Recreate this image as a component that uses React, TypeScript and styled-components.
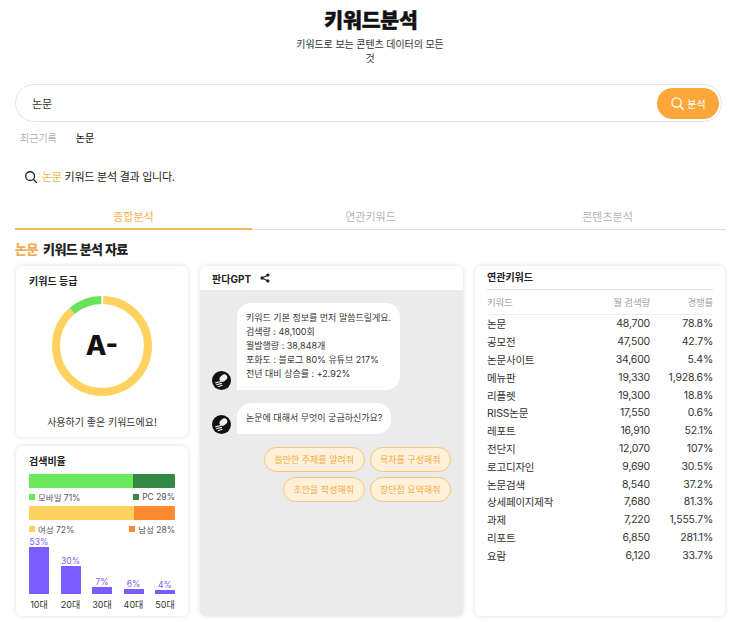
import React from "react";
import styled, { createGlobalStyle } from "styled-components";

const Global = createGlobalStyle`
  html, body { margin: 0; padding: 0; background: #fff; }
  body { font-family: Inter, "Noto Sans CJK KR", sans-serif; color: #222; }
  * { box-sizing: border-box; }
`;
const Page = styled.div`
  width: 743px; height: 622px; overflow: hidden; padding: 9px 18px 0 15px;
`;
const Header = styled.header`
  display: flex; flex-direction: column; align-items: center;
`;
const Title = styled.h1`
  margin: 0 0 0 2px; font-size: 20.5px; line-height: 24px; font-weight: 900; color: #111; letter-spacing: -0.2px;
  -webkit-text-stroke: 0.5px #111;
`;
const Subtitle = styled.p`
  margin: 4px 0 0; width: 155px; text-align: center; font-size: 10px; line-height: 14px; color: #333; letter-spacing: -0.1px;
`;
const SearchBar = styled.div`
  margin-top: 19px; height: 38px; width: 707px; border: 1px solid #e6e6e6; border-radius: 19px;
  display: flex; align-items: center; justify-content: space-between; padding: 0 2px 0 16px;
  font-size: 11px; color: #333;
`;
const SearchButton = styled.div`
  width: 62px; height: 31px; border-radius: 16px; background: #fda63a; color: #fff;
  display: flex; align-items: center; justify-content: center; gap: 2px; font-size: 10px;
`;
const Recent = styled.div`
  display: flex; gap: 19px; margin: 9px 0 0 5px; font-size: 10px; line-height: 14px; color: #b0b0b0;
`;
const RecentItem = styled.span`
  color: #222; font-weight: 500;
`;
const ResultLine = styled.div`
  display: flex; align-items: center; gap: 4px; margin: 24px 0 0 9px; font-size: 11px; line-height: 16px; color: #222; letter-spacing: -0.25px;
`;
const Accent = styled.span`
  color: #f4b24e;
`;
const Tabs = styled.div`
  display: grid; grid-template-columns: repeat(3, 1fr); margin-top: 25px; width: 711px;
`;
const Tab = styled.div<{ $active?: boolean }>`
  text-align: center; font-size: 11px; line-height: 15px; padding-bottom: 5px;
  color: ${(p) => (p.$active ? "#f4b24e" : "#b5b5b5")};
  border-bottom: ${(p) => (p.$active ? "2px solid #f4b860" : "1px solid #ddd")};
  height: 20px;
`;
const SectionTitle = styled.h2`
  margin: 9px 0 0; font-size: 13px; line-height: 20px; font-weight: 800; color: #222; letter-spacing: -0.5px;
  display: flex; gap: 5px;
`;
const SectionAccent = styled.span`
  color: #f2ab57;
`;
const Columns = styled.div`
  display: grid; grid-template-columns: 172px 263px 250px; gap: 12px; margin-top: 7px; padding-left: 1px; height: 350px;
`;
const LeftColumn = styled.div`
  display: flex; flex-direction: column; gap: 9px;
`;
const Card = styled.section`
  background: #fff; border-radius: 6px; box-shadow: 0 0 5px rgba(0,0,0,0.14); overflow: hidden;
`;
const GradeCard = styled(Card)`
  height: 171px; padding: 7px 13px; display: flex; flex-direction: column; align-items: center;
`;
const CardTitle = styled.h3`
  margin: 0; align-self: stretch; font-size: 10px; line-height: 16px; font-weight: 700; color: #222;
`;
const Ring = styled.div`
  position: relative; width: 102px; height: 102px; margin-top: 6px;
`;
const Grade = styled.div`
  position: absolute; inset: 0; display: flex; align-items: center; justify-content: center;
  font-size: 27px; font-weight: 800; color: #111; padding-bottom: 2px;
`;
const GradeNote = styled.div`
  margin-top: 17px; font-size: 10px; line-height: 16px; color: #333;
`;
const RatioCard = styled(Card)`
  height: 170px; padding: 7px 13px 0;
`;
const SplitBar = styled.div<{ $gap: number }>`
  display: flex; height: 14px; margin-top: ${(p) => p.$gap}px; border-radius: 1px; overflow: hidden;
`;
const Segment = styled.div<{ $color: string; $w: number }>`
  width: ${(p) => p.$w}%; background: ${(p) => p.$color};
`;
const LegendRow = styled.div`
  display: flex; justify-content: space-between; height: 17px; align-items: center; font-size: 8.5px; color: #555;
`;
const LegendItem = styled.span`
  display: flex; align-items: center; gap: 3px;
`;
const Swatch = styled.i<{ $color: string }>`
  width: 6px; height: 6px; background: ${(p) => p.$color}; display: block;
`;
const Bars = styled.div`
  display: flex; justify-content: space-between;
`;
const BarCol = styled.div`
  width: 20px; height: 57px; display: flex; flex-direction: column; justify-content: flex-end; align-items: center;
`;
const BarValue = styled.span`
  font-size: 8.5px; line-height: 10px; color: #7b62ee; white-space: nowrap;
`;
const Bar = styled.div`
  width: 20px; background: #7a5cff;
`;
const BarLabels = styled.div`
  display: flex; justify-content: space-between; margin-top: 4px;
`;
const BarLabel = styled.span`
  width: 20px; text-align: center; font-size: 9px; line-height: 14px; color: #333; white-space: nowrap;
`;
const ChatCard = styled(Card)`
  background: #ebebeb; display: flex; flex-direction: column;
`;
const ChatHead = styled.div`
  height: 24px; background: #fff; padding: 0 13px 0 12px; display: flex; align-items: center; gap: 9px;
  font-size: 10px; font-weight: 700; color: #222;
`;
const ChatBody = styled.div`
  padding: 13px 12px 0; display: flex; flex-direction: column; gap: 13px;
`;
const Message = styled.div`
  display: flex; align-items: flex-end; gap: 6px;
`;
const Bubble = styled.div`
  background: #fff; border-radius: 14px 14px 14px 0; padding: 8px 9px 9px; font-size: 9px; line-height: 14px; color: #333;
`;
const Line = styled.div`
  white-space: nowrap;
`;
const Chips = styled.div`
  display: flex; flex-wrap: wrap; justify-content: flex-end; gap: 5px; margin-top: 0; width: 239px;
`;
const Chip = styled.div`
  height: 25px; padding: 0 9.5px; border: 1px solid #f7c576; border-radius: 13px; background: #fff1d9;
  color: #f3ab45; font-size: 9px; display: flex; align-items: center; white-space: nowrap;
`;
const TableCard = styled(Card)`
  padding: 3px 12px 0 12px;
`;
const TableTitle = styled.h3`
  margin: 0; font-size: 10px; line-height: 16px; font-weight: 700; color: #222; padding-bottom: 4px; border-bottom: 1px solid #e5e5e5;
`;
const Row = styled.div<{ $head?: boolean }>`
  display: grid; grid-template-columns: 86px 77px 63px; height: ${(p) => (p.$head ? "25px" : "17.8px")};
  align-items: center; font-size: ${(p) => (p.$head ? "9.5px" : "10.5px")}; color: ${(p) => (p.$head ? "#a5a5a5" : "#333")};
  ${(p) => p.$head && "border-bottom: 1px solid #eee;"}
  letter-spacing: -0.2px;
`;
const Cell = styled.span`
  white-space: nowrap;
`;
const NumCell = styled.span`
  text-align: right; white-space: nowrap;
`;

const SearchIcon = ({ size, color }: { size: number; color: string }) => (
  <svg width={size} height={size} viewBox="0 0 24 24" fill="none" stroke={color} strokeWidth="2.2" strokeLinecap="round">
    <circle cx="10.5" cy="10.5" r="7.5" />
    <path d="M16 16l5.5 5.5" />
  </svg>
);
const ShareIcon = () => (
  <svg width="10" height="10" viewBox="0 0 24 24" fill="#222">
    <circle cx="19" cy="5" r="4" />
    <circle cx="5" cy="12" r="4" />
    <circle cx="19" cy="19" r="4" />
    <path d="M5 12L19 5M5 12l14 7" stroke="#222" strokeWidth="2.5" />
  </svg>
);
const Avatar = () => (
  <svg width="19" height="19" viewBox="0 0 20 20" style={{ flex: "none" }}>
    <circle cx="10" cy="10" r="10" fill="#111" />
    <ellipse cx="12" cy="7.5" rx="4.5" ry="3.2" transform="rotate(-40 12 7.5)" fill="#eee" />
    <path d="M3.5 12.5l6-1.5M4.5 14.5l6-1.5M6 16.5l5-1.5" stroke="#eee" strokeWidth="1.2" />
  </svg>
);
const GradeRing = () => {
  const r = 46;
  const c = 2 * Math.PI * r;
  const gap = 1.2;
  const green = c * 0.11;
  return (
    <svg width="102" height="102" viewBox="0 0 102 102">
      <g transform="rotate(-90 51 51)" fill="none" strokeWidth="8">
        <circle cx="51" cy="51" r={r} stroke="#ffd25f" strokeDasharray={`${c - green - 2 * gap} ${c}`} strokeDashoffset={-gap} />
        <circle cx="51" cy="51" r={r} stroke="#69e45a" strokeDasharray={`${green} ${c}`} strokeDashoffset={-(c - green - gap)} />
      </g>
    </svg>
  );
};

const bars = [
  { label: "10대", v: 53, h: 49 },
  { label: "20대", v: 30, h: 28 },
  { label: "30대", v: 7, h: 7 },
  { label: "40대", v: 6, h: 5.5 },
  { label: "50대", v: 4, h: 4 },
];
const rows = [
  ["논문", "48,700", "78.8%"],
  ["공모전", "47,500", "42.7%"],
  ["논문사이트", "34,600", "5.4%"],
  ["메뉴판", "19,330", "1,928.6%"],
  ["리플렛", "19,300", "18.8%"],
  ["RISS논문", "17,550", "0.6%"],
  ["레포트", "16,910", "52.1%"],
  ["전단지", "12,070", "107%"],
  ["로고디자인", "9,690", "30.5%"],
  ["논문검색", "8,540", "37.2%"],
  ["상세페이지제작", "7,680", "81.3%"],
  ["과제", "7,220", "1,555.7%"],
  ["리포트", "6,850", "281.1%"],
  ["요람", "6,120", "33.7%"],
];

export default function App() {
  return (
    <Page>
      <Global />
      <Header>
        <Title>키워드분석</Title>
        <Subtitle>키워드로 보는 콘텐츠 데이터의 모든 것</Subtitle>
      </Header>
      <SearchBar>
        <span>논문</span>
        <SearchButton>
          <SearchIcon size={15} color="#fff" />
          분석
        </SearchButton>
      </SearchBar>
      <Recent>
        <span>최근기록</span>
        <RecentItem>논문</RecentItem>
      </Recent>
      <ResultLine>
        <SearchIcon size={14} color="#222" />
        <span>
          <Accent>논문</Accent> 키워드 분석 결과 입니다.
        </span>
      </ResultLine>
      <Tabs>
        <Tab $active>종합분석</Tab>
        <Tab>연관키워드</Tab>
        <Tab>콘텐츠분석</Tab>
      </Tabs>
      <SectionTitle>
        <SectionAccent>논문</SectionAccent>
        <span>키워드 분석 자료</span>
      </SectionTitle>
      <Columns>
        <LeftColumn>
          <GradeCard>
            <CardTitle>키워드 등급</CardTitle>
            <Ring>
              <GradeRing />
              <Grade>A-</Grade>
            </Ring>
            <GradeNote>사용하기 좋은 키워드에요!</GradeNote>
          </GradeCard>
          <RatioCard>
            <CardTitle>검색비율</CardTitle>
            <SplitBar $gap={5}>
              <Segment $color="#69e85c" $w={71} />
              <Segment $color="#348a45" $w={29} />
            </SplitBar>
            <LegendRow>
              <LegendItem><Swatch $color="#69e85c" />모바일 71%</LegendItem>
              <LegendItem><Swatch $color="#348a45" />PC 29%</LegendItem>
            </LegendRow>
            <SplitBar $gap={1}>
              <Segment $color="#ffd25f" $w={72} />
              <Segment $color="#fd8a30" $w={28} />
            </SplitBar>
            <LegendRow>
              <LegendItem><Swatch $color="#ffd25f" />여성 72%</LegendItem>
              <LegendItem><Swatch $color="#fd8a30" />남성 28%</LegendItem>
            </LegendRow>
            <Bars>
              {bars.map((b) => (
                <BarCol key={b.label}>
                  <BarValue>{b.v}%</BarValue>
                  <Bar style={{ height: b.h }} />
                </BarCol>
              ))}
            </Bars>
            <BarLabels>
              {bars.map((b) => (
                <BarLabel key={b.label}>{b.label}</BarLabel>
              ))}
            </BarLabels>
          </RatioCard>
        </LeftColumn>
        <ChatCard>
          <ChatHead>
            <span>판다GPT</span>
            <ShareIcon />
          </ChatHead>
          <ChatBody>
            <Message>
              <Avatar />
              <Bubble>
                <Line>키워드 기본 정보를 먼저 말씀드릴게요.</Line>
                <Line>검색량 : 48,100회</Line>
                <Line>월발행량 : 38,848개</Line>
                <Line>포화도 : 블로그 80% 유튜브 217%</Line>
                <Line>전년 대비 상승률 : +2.92%</Line>
              </Bubble>
            </Message>
            <Message>
              <Avatar />
              <Bubble>
                <Line>논문에 대해서 무엇이 궁금하신가요?</Line>
              </Bubble>
            </Message>
            <Chips>
              <Chip>쓸만한 주제를 알려줘</Chip>
              <Chip>목차를 구성해줘</Chip>
              <Chip>초안을 작성해줘</Chip>
              <Chip>장단점 요약해줘</Chip>
            </Chips>
          </ChatBody>
        </ChatCard>
        <TableCard>
          <TableTitle>연관키워드</TableTitle>
          <Row $head>
            <Cell>키워드</Cell>
            <NumCell>월 검색량</NumCell>
            <NumCell>경쟁률</NumCell>
          </Row>
          {rows.map((r) => (
            <Row key={r[0]}>
              <Cell>{r[0]}</Cell>
              <NumCell>{r[1]}</NumCell>
              <NumCell>{r[2]}</NumCell>
            </Row>
          ))}
        </TableCard>
      </Columns>
    </Page>
  );
}
